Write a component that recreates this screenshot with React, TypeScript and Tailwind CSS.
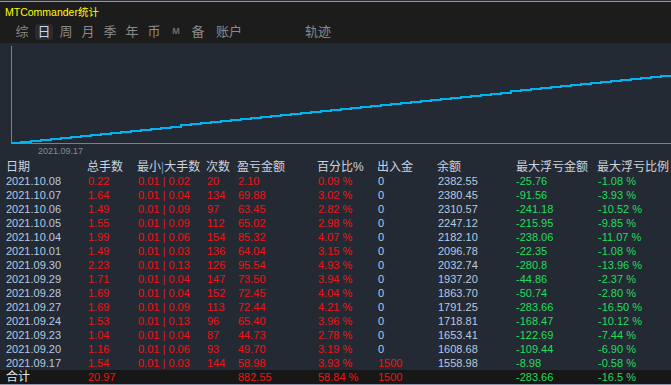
import React from "react";

type Row = {
  date: string;
  lots: string;
  minMax: [string, string];
  count: string;
  pnl: string;
  pct: string;
  io: string;
  balance: string;
  maxDd: string;
  maxDdPct: string;
};

const rows: Row[] = [
  { date: "2021.10.08", lots: "0.22", minMax: ["0.01", "0.02"], count: "20", pnl: "2.10", pct: "0.09 %", io: "0", balance: "2382.55", maxDd: "-25.76", maxDdPct: "-1.08 %" },
  { date: "2021.10.07", lots: "1.64", minMax: ["0.01", "0.04"], count: "134", pnl: "69.88", pct: "3.02 %", io: "0", balance: "2380.45", maxDd: "-91.56", maxDdPct: "-3.93 %" },
  { date: "2021.10.06", lots: "1.49", minMax: ["0.01", "0.09"], count: "97", pnl: "63.45", pct: "2.82 %", io: "0", balance: "2310.57", maxDd: "-241.18", maxDdPct: "-10.52 %" },
  { date: "2021.10.05", lots: "1.55", minMax: ["0.01", "0.09"], count: "112", pnl: "65.02", pct: "2.98 %", io: "0", balance: "2247.12", maxDd: "-215.95", maxDdPct: "-9.85 %" },
  { date: "2021.10.04", lots: "1.99", minMax: ["0.01", "0.06"], count: "154", pnl: "85.32", pct: "4.07 %", io: "0", balance: "2182.10", maxDd: "-238.06", maxDdPct: "-11.07 %" },
  { date: "2021.10.01", lots: "1.49", minMax: ["0.01", "0.03"], count: "136", pnl: "64.04", pct: "3.15 %", io: "0", balance: "2096.78", maxDd: "-22.35", maxDdPct: "-1.08 %" },
  { date: "2021.09.30", lots: "2.23", minMax: ["0.01", "0.13"], count: "126", pnl: "95.54", pct: "4.93 %", io: "0", balance: "2032.74", maxDd: "-280.8", maxDdPct: "-13.96 %" },
  { date: "2021.09.29", lots: "1.71", minMax: ["0.01", "0.04"], count: "147", pnl: "73.50", pct: "3.94 %", io: "0", balance: "1937.20", maxDd: "-44.86", maxDdPct: "-2.37 %" },
  { date: "2021.09.28", lots: "1.69", minMax: ["0.01", "0.04"], count: "152", pnl: "72.45", pct: "4.04 %", io: "0", balance: "1863.70", maxDd: "-50.74", maxDdPct: "-2.80 %" },
  { date: "2021.09.27", lots: "1.69", minMax: ["0.01", "0.09"], count: "113", pnl: "72.44", pct: "4.21 %", io: "0", balance: "1791.25", maxDd: "-283.66", maxDdPct: "-16.50 %" },
  { date: "2021.09.24", lots: "1.53", minMax: ["0.01", "0.13"], count: "96", pnl: "65.40", pct: "3.96 %", io: "0", balance: "1718.81", maxDd: "-168.47", maxDdPct: "-10.12 %" },
  { date: "2021.09.23", lots: "1.04", minMax: ["0.01", "0.04"], count: "87", pnl: "44.73", pct: "2.78 %", io: "0", balance: "1653.41", maxDd: "-122.69", maxDdPct: "-7.44 %" },
  { date: "2021.09.20", lots: "1.16", minMax: ["0.01", "0.06"], count: "93", pnl: "49.70", pct: "3.19 %", io: "0", balance: "1608.68", maxDd: "-109.44", maxDdPct: "-6.90 %" },
  { date: "2021.09.17", lots: "1.54", minMax: ["0.01", "0.03"], count: "144", pnl: "58.98", pct: "3.93 %", io: "1500", balance: "1558.98", maxDd: "-8.98", maxDdPct: "-0.58 %" },
];

const tabs = ["综", "日", "周", "月", "季", "年", "币"];

const gridCols = "grid grid-cols-[81px_50px_69px_31px_80px_60px_60px_79px_81px_1fr]";

// staircase equity line
function stairPath() {
  const x0 = 11;
  const x1 = 671;
  const y0 = 100;
  const y1 = 32;
  const step = 10;
  const n = Math.ceil((x1 - x0) / step);
  let d = `M${x0},${y0}`;
  for (let i = 1; i <= n; i++) {
    const x = Math.min(x0 + i * step, x1);
    const y = Math.round(y0 - ((y0 - y1) * i) / n);
    d += ` H${x} V${y}`;
  }
  return d;
}

function Chart() {
  return (
    <div className="bg-[#232a33]">
      <svg width="671" height="103" className="block">
        <line x1="11.5" y1="3" x2="11.5" y2="101" stroke="#7d7f83" strokeWidth="1" />
        <line x1="11" y1="100.5" x2="671" y2="100.5" stroke="#7d7f83" strokeWidth="1" />
        <path d={stairPath()} fill="none" stroke="#00b4f0" strokeWidth="2" shapeRendering="crispEdges" />
      </svg>
      <div className="h-[12px] pl-[38px] text-[9px] leading-[10px] text-[#858b94]">2021.09.17</div>
    </div>
  );
}

export default function App() {
  return (
    <div
      className="w-[671px] h-[385px] overflow-hidden bg-[#1c1c1c] flex flex-col"
      style={{ fontFamily: '"Liberation Sans", Arial, "Noto Sans CJK SC", sans-serif' }}
    >
      <div className="h-px bg-[#2a2d33]" />
      <div className="h-px bg-[#8b9ab0]" />

      {/* title + tabs */}
      <div className="h-[41px] flex flex-col">
        <div className="h-[21px] pl-[5px] pt-[4px] text-[10.5px] leading-[13px] text-[#ffff00]">MTCommander统计</div>
        <div className="flex items-center h-[18px] pl-[11px] text-[13px] text-[#8a8a8a]">
          {tabs.map((t) => (
            <div key={t} className="w-[22px] flex justify-center">
              {t === "日" ? (
                <span className="w-[18px] h-[16px] rounded-[3px] bg-[#272c34] text-[#c8d6ea] flex items-center justify-center">
                  {t}
                </span>
              ) : (
                <span>{t}</span>
              )}
            </div>
          ))}
          <div className="w-[22px] flex justify-center text-[9px] font-bold text-[#7a6a6a]">M</div>
          <div className="w-[22px] flex justify-center">备</div>
          <div className="w-[40px] flex justify-center">账户</div>
          <div className="ml-[56px]">轨迹</div>
        </div>
      </div>

      <Chart />

      {/* table */}
      <div className="flex-1 bg-[#232a33] flex flex-col">
        <div className={`${gridCols} h-[16px] items-center pl-[6px] text-[12px] text-[#cbd4df]`}>
          <div>日期</div>
          <div>总手数</div>
          <div>
            最小<span className="text-[#5d8fd0]">|</span>大手数
          </div>
          <div>次数</div>
          <div>盈亏金额</div>
          <div>百分比%</div>
          <div>出入金</div>
          <div>余额</div>
          <div>最大浮亏金额</div>
          <div>最大浮亏比例</div>
        </div>

        {rows.map((r) => (
          <div
            key={r.date}
            className={`${gridCols} h-[14px] items-center pl-[6px] text-[11px] leading-[14px] whitespace-nowrap`}
          >
            <div className="text-[#b7c9e2]">{r.date}</div>
            <div className="text-[#f01414] pl-px">{r.lots}</div>
            <div className="text-[#f01414] pl-px">
              {r.minMax[0]} | {r.minMax[1]}
            </div>
            <div className="text-[#f01414] pl-px">{r.count}</div>
            <div className="text-[#f01414] pl-px">{r.pnl}</div>
            <div className="text-[#f01414] pl-px">{r.pct}</div>
            <div className={`pl-px ${r.io === "0" ? "text-[#b7c9e2]" : "text-[#f01414]"}`}>{r.io}</div>
            <div className="text-[#b7c9e2] pl-px">{r.balance}</div>
            <div className="text-[#22dd5a]">{r.maxDd}</div>
            <div className="text-[#22dd5a] pl-px">{r.maxDdPct}</div>
          </div>
        ))}

        <div className={`${gridCols} h-[14px] items-center pl-[6px] text-[11px] leading-[14px] bg-[#171717] whitespace-nowrap`}>
          <div className="text-[12px] text-[#e2e6ea]">合计</div>
          <div className="text-[#f01414] pl-px">20.97</div>
          <div />
          <div />
          <div className="text-[#f01414] pl-px">882.55</div>
          <div className="text-[#f01414] pl-px">58.84 %</div>
          <div className="text-[#f01414] pl-px">1500</div>
          <div />
          <div className="text-[#22dd5a]">-283.66</div>
          <div className="text-[#22dd5a] pl-px">-16.5 %</div>
        </div>
        <div className="h-px bg-[#8b9ab0]" />
      </div>
    </div>
  );
}
